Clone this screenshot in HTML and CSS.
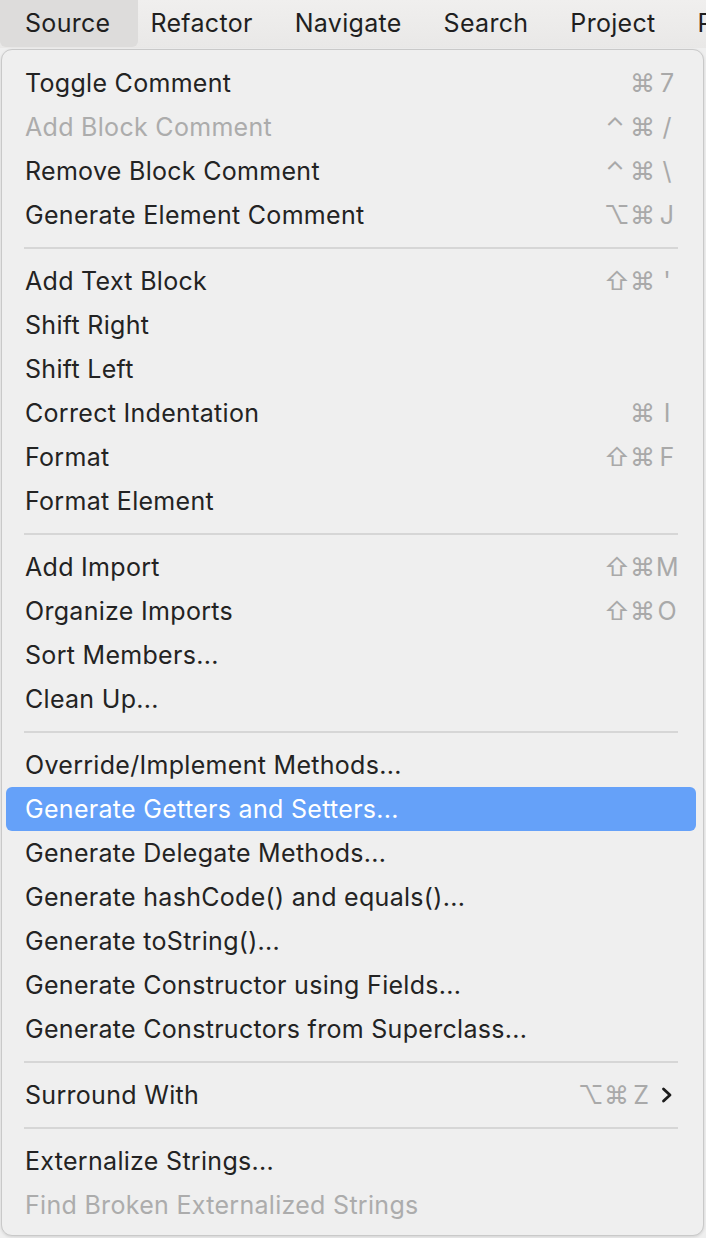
FILE: index.html
```html
<!DOCTYPE html>
<html>
<head>
<meta charset="utf-8">
<link rel="stylesheet" href="styles.css">
</head>
<body>
<div class="menubar">
  <span class="mb-item active">Source</span>
  <span class="mb-item">Refactor</span>
  <span class="mb-item">Navigate</span>
  <span class="mb-item">Search</span>
  <span class="mb-item">Project</span>
  <span class="mb-item">Run</span>
</div>
<div class="menu">
  <ul class="group">
    <li class="item"><span class="label">Toggle Comment</span><span class="keys"><span class="k"></span><span class="k">⌘</span><span class="k">7</span></span></li>
    <li class="item disabled"><span class="label">Add Block Comment</span><span class="keys"><span class="k">⌃</span><span class="k">⌘</span><span class="k">/</span></span></li>
    <li class="item"><span class="label">Remove Block Comment</span><span class="keys"><span class="k">⌃</span><span class="k">⌘</span><span class="k">\</span></span></li>
    <li class="item"><span class="label">Generate Element Comment</span><span class="keys"><span class="k">⌥</span><span class="k">⌘</span><span class="k">J</span></span></li>
  </ul>
  <hr class="sep">
  <ul class="group">
    <li class="item"><span class="label">Add Text Block</span><span class="keys"><span class="k">⇧</span><span class="k">⌘</span><span class="k">'</span></span></li>
    <li class="item"><span class="label">Shift Right</span></li>
    <li class="item"><span class="label">Shift Left</span></li>
    <li class="item"><span class="label">Correct Indentation</span><span class="keys"><span class="k"></span><span class="k">⌘</span><span class="k">I</span></span></li>
    <li class="item"><span class="label">Format</span><span class="keys"><span class="k">⇧</span><span class="k">⌘</span><span class="k">F</span></span></li>
    <li class="item"><span class="label">Format Element</span></li>
  </ul>
  <hr class="sep">
  <ul class="group">
    <li class="item"><span class="label">Add Import</span><span class="keys"><span class="k">⇧</span><span class="k">⌘</span><span class="k">M</span></span></li>
    <li class="item"><span class="label">Organize Imports</span><span class="keys"><span class="k">⇧</span><span class="k">⌘</span><span class="k">O</span></span></li>
    <li class="item"><span class="label">Sort Members...</span></li>
    <li class="item"><span class="label">Clean Up...</span></li>
  </ul>
  <hr class="sep">
  <ul class="group">
    <li class="item"><span class="label">Override/Implement Methods...</span></li>
    <li class="item selected"><span class="label">Generate Getters and Setters...</span></li>
    <li class="item"><span class="label">Generate Delegate Methods...</span></li>
    <li class="item"><span class="label">Generate hashCode() and equals()...</span></li>
    <li class="item"><span class="label">Generate toString()...</span></li>
    <li class="item"><span class="label">Generate Constructor using Fields...</span></li>
    <li class="item"><span class="label">Generate Constructors from Superclass...</span></li>
  </ul>
  <hr class="sep">
  <ul class="group">
    <li class="item"><span class="label">Surround With</span><span class="keys"><span class="k">⌥</span><span class="k">⌘</span><span class="k">Z</span><span class="k arrow"><svg width="12" height="16" viewBox="0 0 12 16"><path d="M2.5 2 L9 8 L2.5 14" fill="none" stroke="#1c1c1c" stroke-width="2.8" stroke-linecap="round" stroke-linejoin="round"/></svg></span></span></li>
  </ul>
  <hr class="sep">
  <ul class="group">
    <li class="item"><span class="label">Externalize Strings...</span></li>
    <li class="item disabled"><span class="label">Find Broken Externalized Strings</span></li>
  </ul>
</div>
</body>
</html>
```
FILE: styles.css
```css
html, body {
  margin: 0;
  padding: 0;
}
body {
  width: 706px;
  height: 1238px;
  overflow: hidden;
  background: #efefef;
  font-family: Inter, "Noto Sans", sans-serif;
  font-size: 25px;
  letter-spacing: 0.3px;
  color: #232323;
}
.menubar {
  height: 48px;
  display: flex;
  align-items: center;
  gap: 42px;
  padding-left: 25px;
  background: linear-gradient(#f0efee, #e9e8e7);
  white-space: nowrap;
  overflow: hidden;
}
.mb-item {
  line-height: 47px;
  align-self: flex-start;
  color: #1f1f1f;
}
.mb-item.active {
  padding: 0 28px 0 25px;
  margin: 0 -30px 0 -25px;
  background: #dddcdb;
  border-radius: 0 0 6px 6px;
}
.menu {
  margin: 1px 2px 0 1px;
  border: 1px solid #c9c9c9;
  border-radius: 11px;
  background: #efefef;
  padding: 11px 7px 8px 4px;
  box-shadow: 0 1px 3px rgba(0,0,0,0.12);
}
.group {
  list-style: none;
  margin: 0;
  padding: 0;
}
.item {
  height: 44px;
  display: flex;
  align-items: center;
  justify-content: space-between;
  padding: 0 18px 0 19px;
  border-radius: 6px;
}
.item.disabled .label {
  color: #acacac;
}
.item.selected {
  background: #65a1f9;
  color: #ffffff;
}
.keys {
  display: flex;
  gap: 4px;
  color: #a9a9a9;
  letter-spacing: 0;
}
.k {
  width: 22px;
  text-align: center;
  font-family: Inter, "DejaVu Sans", sans-serif;
}
.arrow {
  display: flex;
  justify-content: center;
  align-items: center;
}
.sep {
  border: none;
  height: 2px;
  background: #d6d6d6;
  margin: 10px 18px;
}
```
